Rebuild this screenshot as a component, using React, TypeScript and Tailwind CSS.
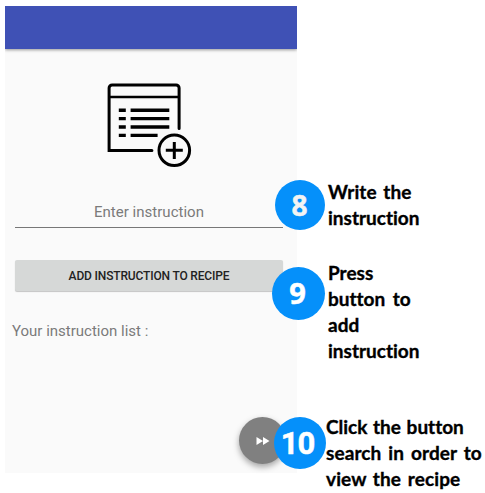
import React from "react";

type Line = { text: string; style: string };

function Note({ lines, className }: { lines: Line[]; className: string }) {
  return (
    <div className={`font-['Lato',sans-serif] text-[19px] font-bold leading-[26px] whitespace-nowrap text-black [font-variant-ligatures:none] [-webkit-text-stroke:0.35px_#000] ${className}`}>
      {lines.map((l) => (
        <div key={l.text} className={l.style}>{l.text}</div>
      ))}
    </div>
  );
}

function RecipeIcon() {
  return (
    <svg width="94" height="90" viewBox="-0.6 0 94 90" fill="none" stroke="#000" strokeWidth="3" className="block">
      <path d="M52.3 70.5H9.5V8a3 3 0 0 1 3-3h64a3 3 0 0 1 3 3v40.5" strokeLinecap="round" />
      <path d="M9.5 17h70" strokeWidth="2.7" />
      <path d="M19.2 30.2h7M19.2 38.6h7M19.2 47h7M19.2 55.4h7M31 30.2h38.7M31 38.6h38.7M31 47h38.7M31 55.4h27" strokeWidth="3.4" />
      <circle cx="74.7" cy="70.3" r="15.3" />
      <path d="M66.2 70.3h17M74.7 62v17" />
    </svg>
  );
}

export default function App() {
  return (
    <div className="relative flex h-[493px] w-[485px] overflow-hidden bg-white pl-[5px] pt-[6px] font-['Roboto',sans-serif]">
      <main className="flex h-[467px] w-[292px] flex-col bg-[#fafafa]">
        <header className="h-[43px] shrink-0 bg-[#3f51b5] shadow-[0_1px_3px_rgba(0,0,0,0.4)] [clip-path:inset(0_0_-5px_0)]" />
        <div className="mt-[31px] flex h-[90px] pl-[94px]">
          <RecipeIcon />
        </div>
        <div className="ml-[10px] mt-[30px] flex h-[28px] w-[268px] justify-center border-b border-[#777] pt-[2px] text-[15px] leading-[20px] text-[#7b7b7b]">
          <span className="tracking-[0.02px]">Enter instruction</span>
        </div>
        <button className="ml-[10px] mt-[32px] flex h-[31px] w-[268px] shrink-0 items-center justify-center rounded-[2px] bg-[#d6d8d7] text-[12px] font-medium tracking-[-0.16px] text-[#222] shadow-[0_1px_1px_rgba(0,0,0,0.22)]">
          ADD INSTRUCTION TO RECIPE
        </button>
        <p className="ml-[7px] mt-[30px] text-[15px] leading-[20px] text-[#7b7b7b]">Your instruction list :</p>
      </main>
      <aside className="relative flex flex-col pl-[31px]">
        <Note
          className="mt-[173px]"
          lines={[
            { text: "Write the", style: "tracking-[0.1px] [word-spacing:2px]" },
            { text: "instruction", style: "" },
          ]}
        />
        <Note
          className="mt-[29px]"
          lines={[
            { text: "Press", style: "" },
            { text: "button to", style: "[word-spacing:3px]" },
            { text: "add", style: "" },
            { text: "instruction", style: "" },
          ]}
        />
        <Note
          className="-ml-[2px] mt-[50px]"
          lines={[
            { text: "Click the button", style: "[word-spacing:1px]" },
            { text: "search in order to", style: "tracking-[0.1px] [word-spacing:2.2px]" },
            { text: "view the recipe", style: "tracking-[0.1px] [word-spacing:2px]" },
          ]}
        />
      </aside>
      <div className="absolute left-[239px] top-[417px] flex size-[47px] items-center justify-center rounded-full bg-[#808080] shadow-[0_3px_6px_rgba(0,0,0,0.35)]">
        <svg width="14" height="10" viewBox="0 0 14 10" fill="#fff">
          <path d="M.5 1 7 5 .5 9zM7 1l6.5 4L7 9z" />
        </svg>
      </div>
      <div className="absolute left-[275px] top-[180px] flex size-[50px] items-center justify-center rounded-full bg-[#0590fa] pr-px font-['Open_Sans',sans-serif] text-[28px] font-bold text-[#f3f3f3] [-webkit-text-stroke:0.5px_#f3f3f3]">8</div>
      <div className="absolute left-[272px] top-[267px] flex size-[53px] items-center justify-center rounded-full bg-[#0590fa] pb-px pr-[2px] font-['Open_Sans',sans-serif] text-[29px] font-bold text-white [-webkit-text-stroke:0.5px_#fff]">9</div>
      <div className="absolute left-[274px] top-[417px] flex size-[52px] items-center justify-center rounded-full bg-[#0590fa] pr-[5px] pt-[2px] font-['Roboto',sans-serif] text-[31px] font-bold tracking-[-1px] text-white [-webkit-text-stroke:0.5px_#fff]">10</div>
    </div>
  );
}
